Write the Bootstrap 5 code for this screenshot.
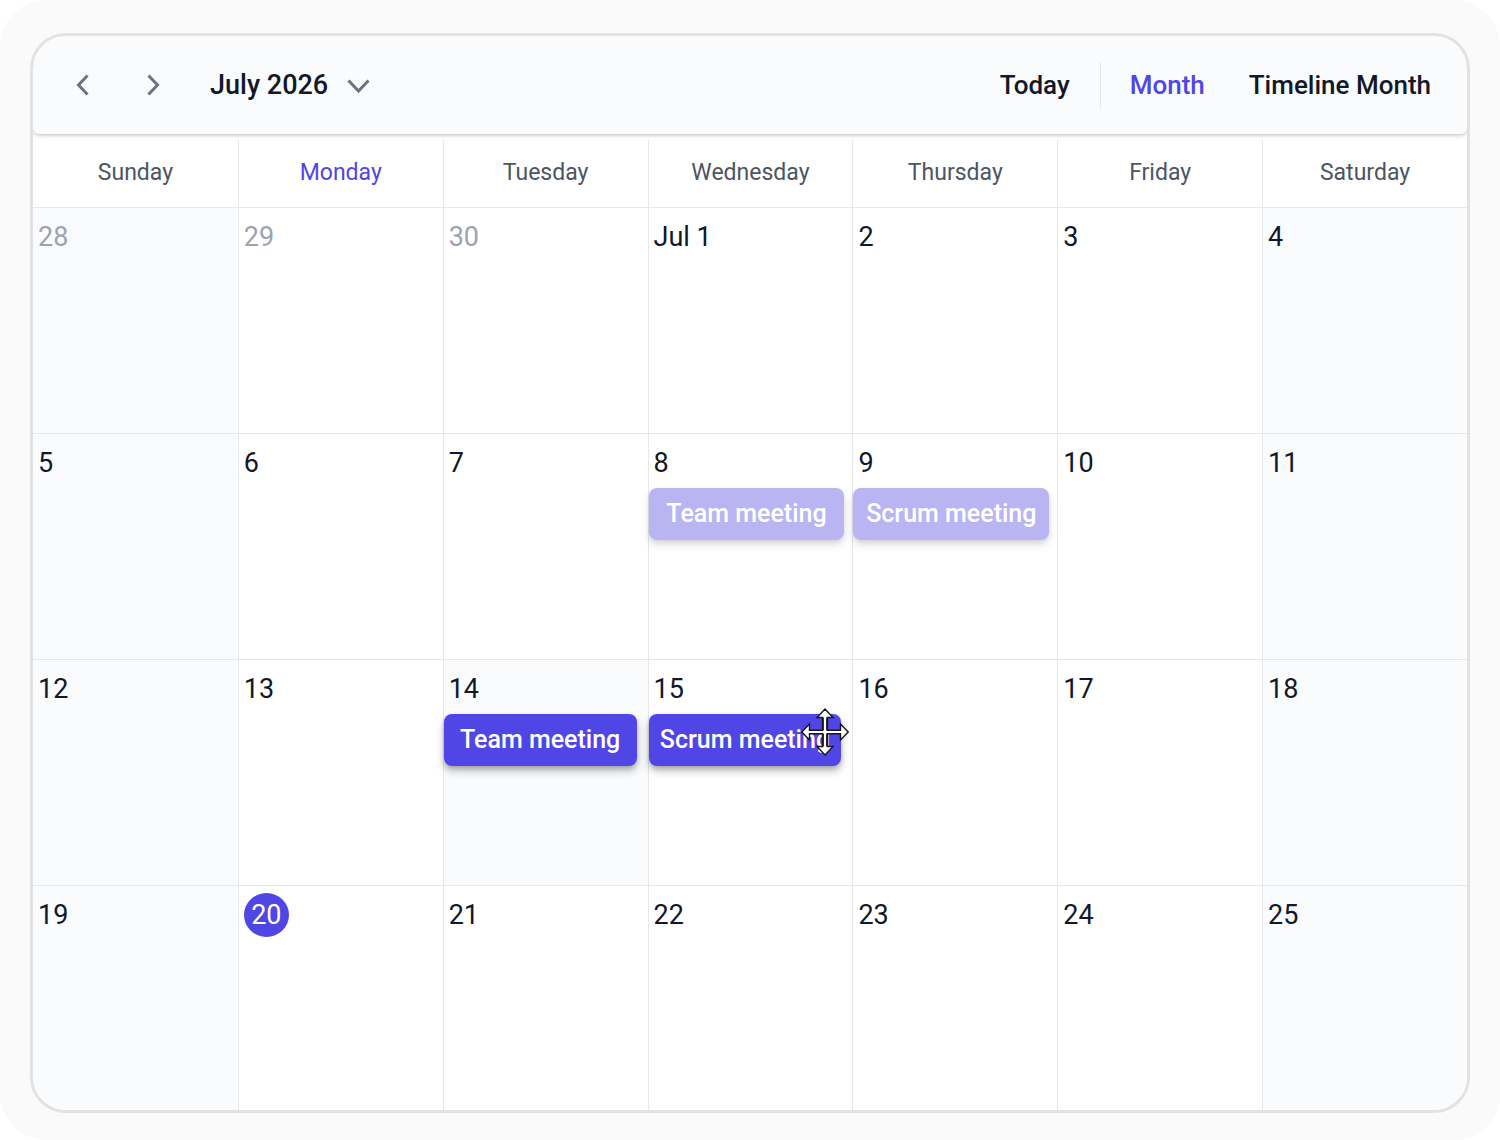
<!DOCTYPE html>
<html lang="en">
<head>
<meta charset="utf-8">
<meta name="viewport" content="width=device-width, initial-scale=1">
<title>July 2026 – Scheduler</title>
<link href="https://cdn.jsdelivr.net/npm/bootstrap@5.3.0/dist/css/bootstrap.min.css" rel="stylesheet">
<style>
  :root { --accent: #4f46e5; --ink: #111827; --line: #e5e7eb; --tint: #f9fbfd; }
  body { font-family: Roboto, "Liberation Sans", sans-serif; color: var(--ink); background: #fff; }
  .stage { min-height: 100vh; padding: 33px 30px 27px; background: #fafafa; border-radius: 46px; }
  .scheduler { flex: 1; background: #fff; border: 3px solid #e2e2e2; border-radius: 36px; overflow: hidden; }
  .toolbar { height: 98px; padding: 0 36px 0 29px; background: var(--tint); border-radius: 0 0 6px 6px; box-shadow: 0 1px 4px rgba(0,0,0,.28); }
  .tool { border: 0; background: none; padding: 0; font-size: 26px; line-height: 40px; font-weight: 500; color: var(--ink); }
  .tool.current { color: var(--accent); }
  .arrow { width: 42px; height: 48px; display: grid; place-items: center; }
  .arrow + .arrow { margin-left: 28px; }
  .period { margin-left: 36px; gap: 18px; font-size: 27px; }
  .tool svg { fill: none; stroke: #6b7280; stroke-width: 3; }
  .divider { width: 1px; height: 47px; background: var(--line); margin: 0 29px 0 30px; }
  .view { margin-left: 44px; }
  .month-grid { width: 100%; table-layout: fixed; border-collapse: separate; border-spacing: 0; margin-top: 6px; }
  .month-grid th { height: 68px; padding: 0; font-size: 23px; font-weight: 400; text-align: center; vertical-align: middle; color: #4b5563; border-bottom: 1px solid var(--line); }
  .month-grid th.current { color: var(--accent); }
  .month-grid td { height: 226px; padding: 0; vertical-align: top; border-bottom: 1px solid var(--line); }
  .month-grid tr:last-child td { height: 224px; border-bottom: 0; }
  .month-grid th + th, .month-grid td + td { border-left: 1px solid var(--line); }
  .month-grid td:first-child, .month-grid td:last-child, .month-grid td.target { background: var(--tint); }
  .date { display: block; height: 44px; margin: 7px 5px 3px; font-size: 27px; line-height: 44px; }
  .date.other { color: #9ca3af; }
  .date.today { width: 45px; text-align: center; color: #fff; background: var(--accent); border-radius: 50%; }
  .event { display: block; position: relative; width: calc(100% - 11px); height: 52px; padding: 0; border: 0; border-radius: 8px; background: var(--accent); color: #fff; font-size: 25px; line-height: 52px; font-weight: 500; white-space: nowrap; box-shadow: 0 5px 9px rgba(0,0,0,.26), 0 2px 4px rgba(0,0,0,.16); }
  .event.ghost { width: calc(100% - 8px); background: #b9b5f3; box-shadow: 0 5px 9px rgba(0,0,0,.12), 0 2px 4px rgba(0,0,0,.07); }
  .cursor { position: absolute; right: -8px; top: -6px; width: 48px; height: 48px; }
  .event .cursor { fill: #fff; stroke: #16161c; stroke-width: 1.4; }
</style>
</head>
<body>
<div class="stage d-flex flex-column">
  <main class="scheduler">
    <header class="toolbar d-flex align-items-center justify-content-between">
      <div class="d-flex align-items-center">
        <button class="tool arrow" type="button" aria-label="Previous month"><svg width="14" height="24" viewBox="0 0 14 24"><path d="M11.500 2.500 2.500 12l9 9.500"/></svg></button>
        <button class="tool arrow" type="button" aria-label="Next month"><svg width="14" height="24" viewBox="0 0 14 24"><path d="M2.500 2.500l9 9.500-9 9.500"/></svg></button>
        <button class="tool period d-flex align-items-center" type="button">July 2026<svg width="24" height="16" viewBox="0 0 24 16"><path d="M2.500 3.500 12.500 14 22.500 3.500"/></svg></button>
      </div>
      <div class="d-flex align-items-center">
        <button class="tool" type="button">Today</button>
        <span class="divider"></span>
        <button class="tool current" type="button">Month</button>
        <button class="tool view" type="button">Timeline Month</button>
      </div>
    </header>
    <table class="month-grid">
      <thead>
        <tr><th scope="col">Sunday</th><th scope="col" class="current">Monday</th><th scope="col">Tuesday</th><th scope="col">Wednesday</th><th scope="col">Thursday</th><th scope="col">Friday</th><th scope="col">Saturday</th></tr>
      </thead>
      <tbody>
        <tr><td><span class="date other">28</span></td><td><span class="date other">29</span></td><td><span class="date other">30</span></td><td><span class="date">Jul 1</span></td><td><span class="date">2</span></td><td><span class="date">3</span></td><td><span class="date">4</span></td></tr>
        <tr><td><span class="date">5</span></td><td><span class="date">6</span></td><td><span class="date">7</span></td><td><span class="date">8</span><button class="event ghost" type="button">Team meeting</button></td><td><span class="date">9</span><button class="event ghost" type="button">Scrum meeting</button></td><td><span class="date">10</span></td><td><span class="date">11</span></td></tr>
        <tr><td><span class="date">12</span></td><td><span class="date">13</span></td><td class="target"><span class="date">14</span><button class="event" type="button">Team meeting</button></td><td><span class="date">15</span><button class="event" type="button">Scrum meeting<svg class="cursor" viewBox="0 0 48 48" aria-hidden="true"><path d="M24 1 32 9.500H26.200V22.200H39.500V16L47.200 24 39.500 32V25.800H26.200V38.500H32L24 47 16 38.500H21.800V25.800H8.500V32L.8 24 8.500 16V22.200H21.800V9.500H16Z"/><path d="M21.800 10v12M26.200 10v12M21.800 26v12M26.200 26v12" stroke-width="2"/></svg></button></td><td><span class="date">16</span></td><td><span class="date">17</span></td><td><span class="date">18</span></td></tr>
        <tr><td><span class="date">19</span></td><td><span class="date today">20</span></td><td><span class="date">21</span></td><td><span class="date">22</span></td><td><span class="date">23</span></td><td><span class="date">24</span></td><td><span class="date">25</span></td></tr>
      </tbody>
    </table>
  </main>
</div>
<script src="https://cdn.jsdelivr.net/npm/bootstrap@5.3.0/dist/js/bootstrap.bundle.min.js"></script>
</body>
</html>
